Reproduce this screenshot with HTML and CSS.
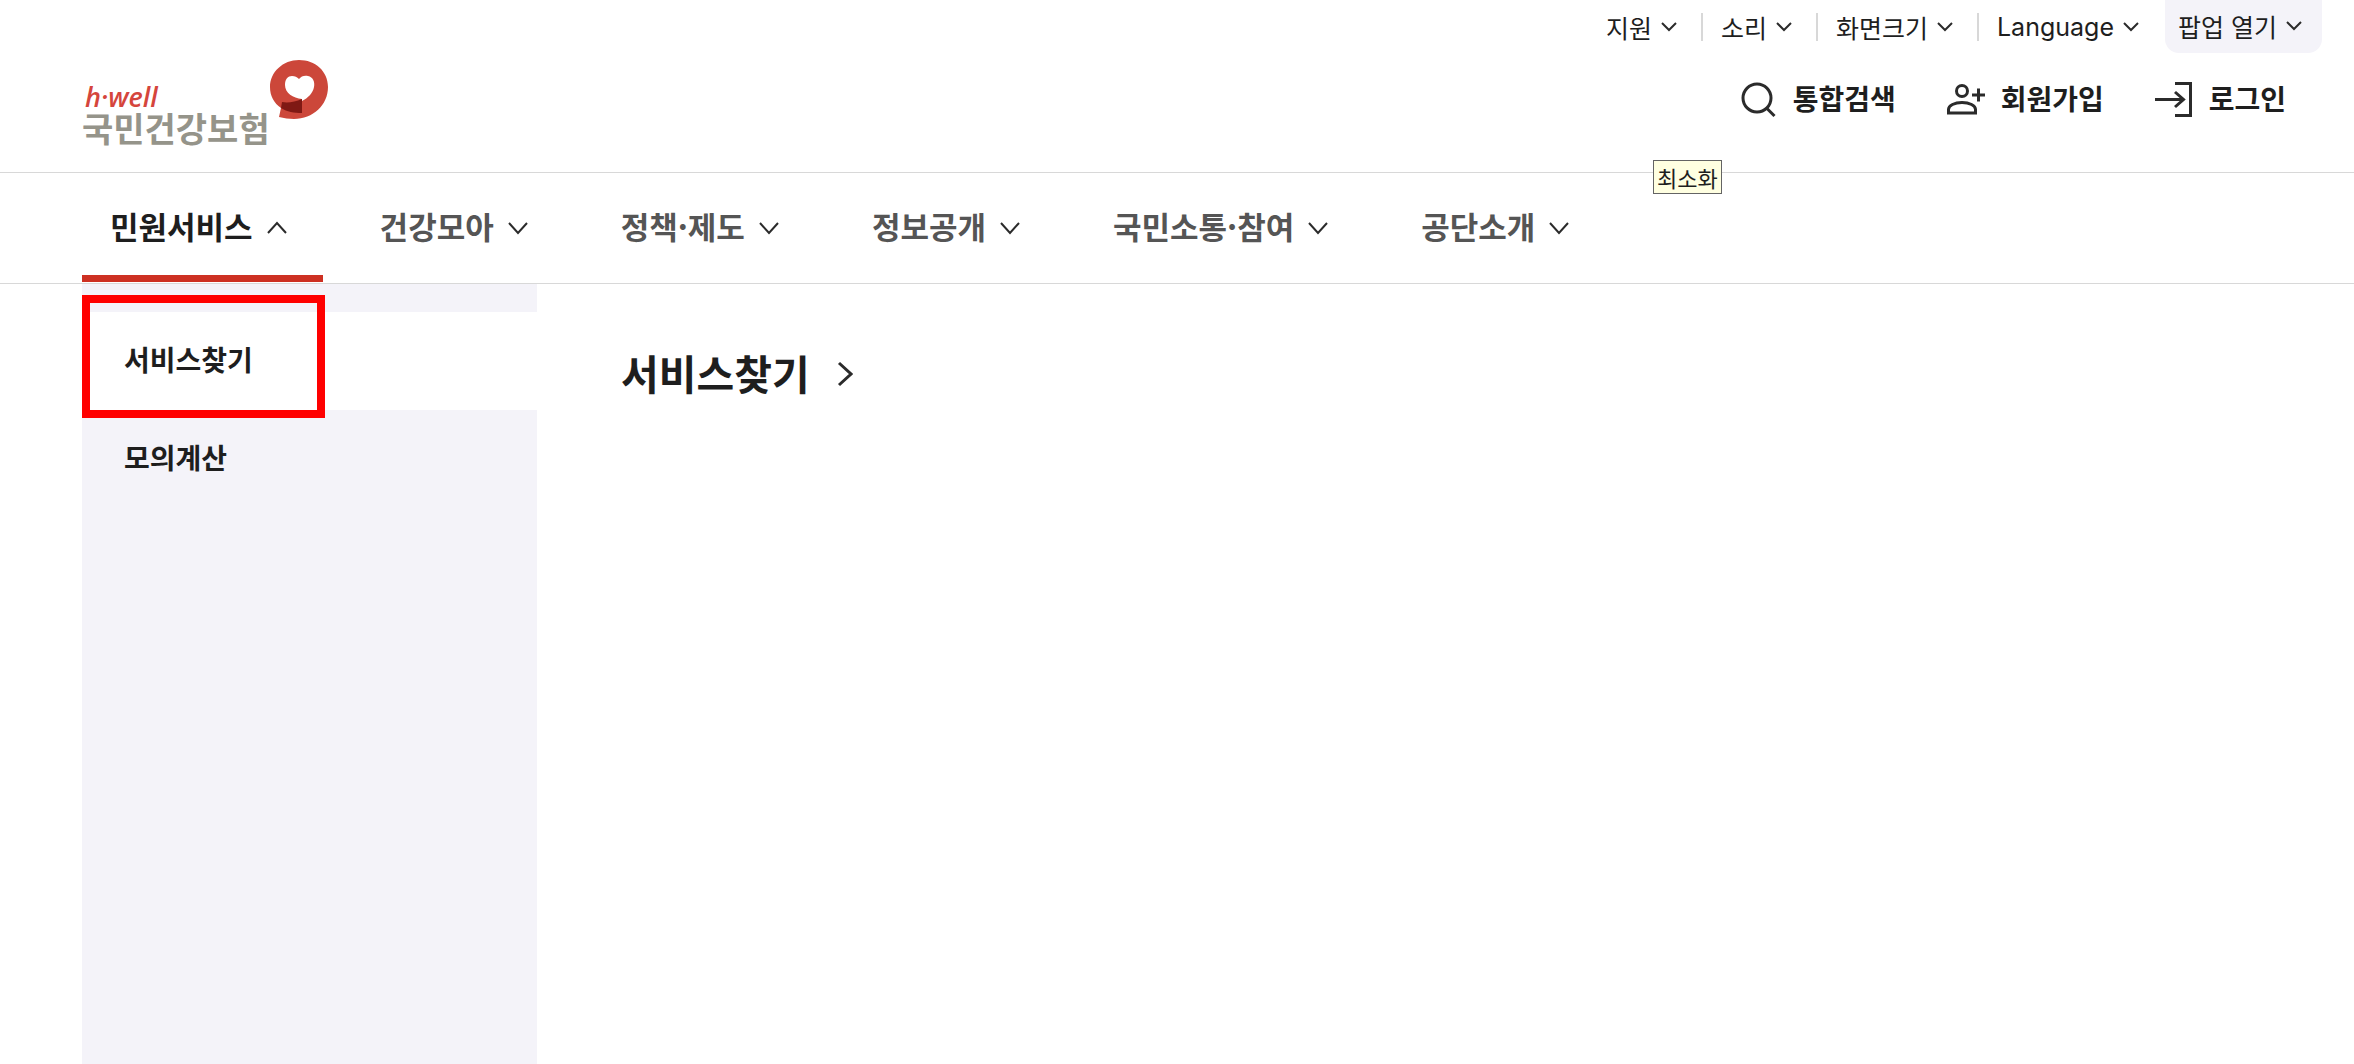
FILE: index.html
```html
<!DOCTYPE html>
<html lang="ko">
<head>
    <meta charset="UTF-8">
    <meta name="viewport" content="width=device-width, initial-scale=1.0">
    <title>국민건강보험</title>
    <link rel="stylesheet" href="styles.css">
</head>
<body>
    <header class="header">
        <div class="util">
            <button type="button" class="util-btn">지원 <svg class="arrow-sm" viewBox="0 0 16 10"><path d="M1 1l7 7 7-7"/></svg></button>
            <button type="button" class="util-btn">소리 <svg class="arrow-sm" viewBox="0 0 16 10"><path d="M1 1l7 7 7-7"/></svg></button>
            <button type="button" class="util-btn">화면크기 <svg class="arrow-sm" viewBox="0 0 16 10"><path d="M1 1l7 7 7-7"/></svg></button>
            <button type="button" class="util-btn lang">Language <svg class="arrow-sm" viewBox="0 0 16 10"><path d="M1 1l7 7 7-7"/></svg></button>
            <button type="button" class="popup-btn">팝업 열기 <svg class="arrow-sm" viewBox="0 0 16 10"><path d="M1 1l7 7 7-7"/></svg></button>
        </div>

        <div class="header-main">
            <a href="#" class="logo">
                <span class="logo-text">
                    <span class="logo-en">h·well</span>
                    <span class="logo-ko">국민건강보험</span>
                </span>
                <svg class="logo-mark" viewBox="0 0 58 60">
                    <path fill="#cc473a" d="M29 0C45 0 58 11 58 27c0 18-15 32-34 32-5 0-10-1-15-2l2-9C4 43 0 36 0 27 0 12 13 0 29 0z"/>
                    <path fill="#fff" d="M29 19c2-3 6-4 9-3 5 1 7 6 6 11-1 6-6 11-12 14v-2c-9-1-17-6-17-14 0-6 3-9 7-9 3 0 5 1 7 3z"/>
                    <path fill="#7f1914" d="M12 42c6 1 13 0 20-3v14c-8 0-15-1-21-5z"/>
                </svg>
            </a>
            <div class="actions">
                <a href="#" class="action">
                    <svg class="icon icon-search" viewBox="0 0 36 36"><circle cx="16" cy="16" r="14"/><path d="M25.500 26l8 8"/></svg>
                    통합검색
                </a>
                <a href="#" class="action">
                    <svg class="icon icon-join" viewBox="0 0 38 36"><circle cx="15" cy="9" r="5.500"/><path d="M1.500 31v-3.500c0-4 6-7 13.500-7s13.500 3 13.500 7V31zM25 13h13M31.500 6.500v13"/></svg>
                    회원가입
                </a>
                <a href="#" class="action">
                    <svg class="icon icon-login" viewBox="0 0 38 36"><path d="M20 1.500h15.500v32H20M0 17.500h29M20 10l8.500 7.500L20 25"/></svg>
                    로그인
                </a>
            </div>
        </div>
        <span class="tooltip" role="tooltip">최소화</span>
    </header>

    <nav class="gnb">
        <button type="button" class="gnb-btn active">민원서비스 <svg class="arrow" viewBox="0 0 22 14"><path d="M2 12l9-10 9 10"/></svg></button>
        <button type="button" class="gnb-btn">건강모아 <svg class="arrow" viewBox="0 0 22 14"><path d="M2 2l9 10 9-10"/></svg></button>
        <button type="button" class="gnb-btn">정책·제도 <svg class="arrow" viewBox="0 0 22 14"><path d="M2 2l9 10 9-10"/></svg></button>
        <button type="button" class="gnb-btn">정보공개 <svg class="arrow" viewBox="0 0 22 14"><path d="M2 2l9 10 9-10"/></svg></button>
        <button type="button" class="gnb-btn">국민소통·참여 <svg class="arrow" viewBox="0 0 22 14"><path d="M2 2l9 10 9-10"/></svg></button>
        <button type="button" class="gnb-btn">공단소개 <svg class="arrow" viewBox="0 0 22 14"><path d="M2 2l9 10 9-10"/></svg></button>
    </nav>

    <main class="submenu">
        <div class="side">
            <a href="#" class="side-link on">서비스찾기</a>
            <a href="#" class="side-link">모의계산</a>
            <span class="highlight"></span>
        </div>
        <section class="content">
            <h2><a href="#" class="title">서비스찾기 <svg class="arrow-right" viewBox="0 0 16 26"><path d="M2 2l12 11L2 24"/></svg></a></h2>
        </section>
    </main>
</body>
</html>
```
FILE: styles.css
```css
* {
    box-sizing: border-box;
}

body {
    margin: 0;
    min-height: 100vh;
    display: flex;
    flex-direction: column;
    background-color: #fff;
    color: #1e1e1e;
    font-family: "Noto Sans CJK KR", sans-serif;
}

a {
    color: inherit;
    text-decoration: none;
}

button {
    border: none;
    background: none;
    padding: 0;
    color: inherit;
    font-family: inherit;
    cursor: pointer;
}

svg {
    flex: none;
    fill: none;
    stroke: #2b2b2b;
    stroke-width: 2;
}

/* header */
.header {
    position: relative;
    border-bottom: 1px solid #d8d8d8;
}

.util {
    display: flex;
    justify-content: flex-end;
    padding-right: 32px;
}

.util-btn,
.popup-btn {
    display: flex;
    align-items: center;
    gap: 9px;
    font-size: 25px;
    line-height: 28px;
}

.util-btn {
    height: 28px;
    margin-top: 13px;
    padding: 0 24px 0 18px;
    border-right: 2px solid #d8d8d8;
}

.util-btn.lang {
    padding-right: 26px;
    border-right: none;
    font-family: "Inter", sans-serif;
}

.popup-btn {
    height: 53px;
    padding: 0 20px 2px 13px;
    border-radius: 0 0 14px 14px;
    background-color: #f4f3f9;
}

.arrow-sm {
    width: 16px;
    height: 10px;
}

.header-main {
    display: flex;
    justify-content: space-between;
    align-items: flex-start;
    height: 119px;
    padding: 0 68px 0 82px;
}

.logo {
    display: flex;
    align-items: flex-start;
    margin-top: 7px;
}

.logo-text {
    display: flex;
    flex-direction: column;
    padding-top: 22px;
    font-weight: 700;
}

.logo-en {
    padding-left: 3px;
    color: #d5453c;
    font-family: "Open Sans", sans-serif;
    font-size: 27px;
    font-style: italic;
    font-weight: 600;
    line-height: 30px;
}

.logo-ko {
    color: #95948a;
    font-size: 34px;
    line-height: 32px;
}

.logo-mark {
    width: 58px;
    height: 60px;
    stroke: none;
}

.actions {
    display: flex;
    gap: 51px;
    padding-top: 25px;
}

.action {
    display: flex;
    align-items: center;
    gap: 16px;
    font-size: 28px;
    font-weight: 700;
    line-height: 40px;
}

.icon {
    width: 38px;
    height: 36px;
    margin-top: 4px;
    stroke-width: 3;
}

.icon-search {
    width: 36px;
}

.tooltip {
    position: absolute;
    top: 160px;
    left: 1653px;
    padding: 0 3px;
    border: 1px solid #646464;
    background-color: #ffffe1;
    font-size: 22px;
    line-height: 32px;
}

/* main menu */
.gnb {
    display: flex;
    gap: 29px;
    padding-left: 82px;
    border-bottom: 1px solid #d8d8d8;
}

.gnb-btn {
    display: flex;
    align-items: center;
    gap: 13px;
    height: 110px;
    padding: 0 35px 5px 28px;
    color: #555;
    font-size: 31px;
    font-weight: 700;
}

.gnb-btn.active {
    position: relative;
    color: #1e1e1e;
}

.gnb-btn.active::after {
    content: "";
    position: absolute;
    left: 0;
    right: 0;
    bottom: 1px;
    height: 7px;
    background-color: #cd3022;
}

.arrow {
    width: 22px;
    height: 14px;
    margin-top: 4px;
}

/* opened submenu */
.submenu {
    flex: 1;
    display: flex;
    padding-left: 82px;
}

.side {
    position: relative;
    width: 455px;
    padding-top: 28px;
    background-color: #f4f3f9;
}

.side-link {
    display: block;
    padding: 0 42px 4px;
    font-size: 28px;
    font-weight: 700;
    line-height: 94px;
}

.side-link.on {
    background-color: #fff;
}

.highlight {
    position: absolute;
    top: 11px;
    left: 0;
    width: 243px;
    height: 123px;
    border: 8px solid #f00;
}

.content {
    flex: 1;
    padding: 58px 84px;
}

h2 {
    margin: 0;
}

.title {
    display: flex;
    align-items: center;
    gap: 27px;
    font-size: 41px;
    line-height: 60px;
}

.arrow-right {
    width: 16px;
    height: 26px;
    margin-top: 4px;
    stroke-width: 3;
}
```
